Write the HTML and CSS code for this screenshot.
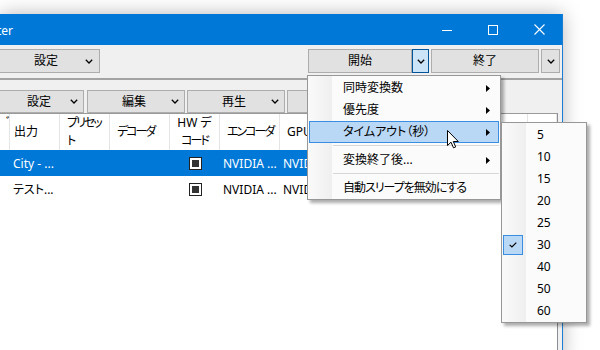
FILE: index.html
```html
<!DOCTYPE html>
<html lang="ja">
<head>
<meta charset="utf-8">
<link rel="stylesheet" href="styles.css">
</head>
<body>
<div class="desk">
  <div class="win">
    <div class="titlebar">
      <span class="title">ter</span>
      <div class="caps">
        <span class="cap"><svg width="10" height="10" viewBox="0 0 10 10"><line x1="0" y1="5.5" x2="10" y2="5.5" stroke="#fff" stroke-width="1"/></svg></span>
        <span class="cap"><svg width="10" height="10" viewBox="0 0 10 10"><rect x="0.5" y="0.5" width="9" height="9" fill="none" stroke="#fff" stroke-width="1"/></svg></span>
        <span class="cap"><svg width="11" height="11" viewBox="0 0 11 11"><path d="M0.5 0.5 L10.5 10.5 M10.5 0.5 L0.5 10.5" stroke="#fff" stroke-width="1.1"/></svg></span>
      </div>
    </div>

    <div class="tb1">
      <div class="btn btn-dd b-set"><span></span><span class="lbl">設定</span><svg class="chev" width="8" height="5" viewBox="0 0 8 5"><polyline points="0.8,0.8 4,4 7.2,0.8" fill="none" stroke="#000" stroke-width="1.3"/></svg></div>
      <div class="spacer"></div>
      <div class="btn b-start"><span class="lbl">開始</span></div>
      <div class="btn b-dd pressed"><svg width="8" height="5" viewBox="0 0 8 5"><polyline points="0.8,0.8 4,4 7.2,0.8" fill="none" stroke="#000" stroke-width="1.3"/></svg></div>
      <div class="btn b-end"><span class="lbl">終了</span></div>
      <div class="btn b-dd2"><svg width="8" height="5" viewBox="0 0 8 5"><polyline points="0.8,0.8 4,4 7.2,0.8" fill="none" stroke="#000" stroke-width="1.3"/></svg></div>
    </div>

    <div class="tb2">
      <div class="btn btn-dd b2 b2-first"><span></span><span class="lbl">設定</span><svg class="chev" width="8" height="5" viewBox="0 0 8 5"><polyline points="0.8,0.8 4,4 7.2,0.8" fill="none" stroke="#000" stroke-width="1.3"/></svg></div>
      <div class="btn btn-dd b2"><span></span><span class="lbl">編集</span><svg class="chev" width="8" height="5" viewBox="0 0 8 5"><polyline points="0.8,0.8 4,4 7.2,0.8" fill="none" stroke="#000" stroke-width="1.3"/></svg></div>
      <div class="btn btn-dd b2"><span></span><span class="lbl">再生</span><svg class="chev" width="8" height="5" viewBox="0 0 8 5"><polyline points="0.8,0.8 4,4 7.2,0.8" fill="none" stroke="#000" stroke-width="1.3"/></svg></div>
      <div class="btn btn-dd b2"><span></span><span class="lbl">表示</span><svg class="chev" width="8" height="5" viewBox="0 0 8 5"><polyline points="0.8,0.8 4,4 7.2,0.8" fill="none" stroke="#000" stroke-width="1.3"/></svg></div>
    </div>

    <div class="list">
      <div class="cols hdr">
        <div class="hc hc0">ﾞ</div>
        <div class="hc hc-out">出力</div>
        <div class="hc kn">プリセッ<br>ト</div>
        <div class="hc kn">デコーダ</div>
        <div class="hc hc-center"><span>HW デ<br><span class="kn">コード</span></span></div>
        <div class="hc kn">エンコーダ</div>
        <div class="hc">GPU</div>
        <div class="hc"></div>
        <div class="hc"></div>
        <div class="hc"></div>
        <div class="hc"></div>
      </div>
      <div class="cols row sel">
        <div class="c"></div>
        <div class="c">City - ...</div>
        <div class="c"></div>
        <div class="c"></div>
        <div class="c c-center"><span class="chk"></span></div>
        <div class="c">NVIDIA ...</div>
        <div class="c">NVIDIA ...</div>
        <div class="c"></div>
        <div class="c"></div>
        <div class="c"></div>
        <div class="c"></div>
      </div>
      <div class="cols row">
        <div class="c"></div>
        <div class="c">テスト...</div>
        <div class="c"></div>
        <div class="c"></div>
        <div class="c c-center"><span class="chk"></span></div>
        <div class="c">NVIDIA ...</div>
        <div class="c">NVIDIA ...</div>
        <div class="c"></div>
        <div class="c"></div>
        <div class="c"></div>
        <div class="c"></div>
      </div>
    </div>
  </div>

  <div class="menu">
    <div class="mi"><span class="ico"></span><span class="mt">同時変換数</span><svg class="arr" width="4" height="7" viewBox="0 0 4 7"><polygon points="0,0 4,3.5 0,7" fill="#000"/></svg></div>
    <div class="mi"><span class="ico"></span><span class="mt">優先度</span><svg class="arr" width="4" height="7" viewBox="0 0 4 7"><polygon points="0,0 4,3.5 0,7" fill="#000"/></svg></div>
    <div class="mi hot"><span class="ico"></span><span class="mt">タイムアウト（秒）</span><svg class="arr" width="4" height="7" viewBox="0 0 4 7"><polygon points="0,0 4,3.5 0,7" fill="#000"/></svg></div>
    <div class="sep"></div>
    <div class="mi"><span class="ico"></span><span class="mt">変換終了後...</span><svg class="arr" width="4" height="7" viewBox="0 0 4 7"><polygon points="0,0 4,3.5 0,7" fill="#000"/></svg></div>
    <div class="sep"></div>
    <div class="mi"><span class="ico"></span><span class="mt mt-tight">自動スリープを無効にする</span></div>
  </div>

  <div class="menu sub">
    <div class="mi"><span class="ico"></span><span class="mt">5</span></div>
    <div class="mi"><span class="ico"></span><span class="mt">10</span></div>
    <div class="mi"><span class="ico"></span><span class="mt">15</span></div>
    <div class="mi"><span class="ico"></span><span class="mt">20</span></div>
    <div class="mi"><span class="ico"></span><span class="mt">25</span></div>
    <div class="mi"><span class="ico checked"><svg width="8" height="6" viewBox="0 0 8 6"><polyline points="0.7,2.8 2.9,5 7.3,0.6" fill="none" stroke="#000" stroke-width="1.2"/></svg></span><span class="mt">30</span></div>
    <div class="mi"><span class="ico"></span><span class="mt">40</span></div>
    <div class="mi"><span class="ico"></span><span class="mt">50</span></div>
    <div class="mi"><span class="ico"></span><span class="mt">60</span></div>
  </div>

  <svg class="cursor" width="13" height="19" viewBox="0 0 13 19"><path d="M0.5 0.5 L0.5 15.5 L4 12.2 L6.5 17.8 L8.7 16.9 L6.3 11.5 L11.3 11.5 Z" fill="#fff" stroke="#000" stroke-width="1" stroke-linejoin="miter"/></svg>
</div>
</body>
</html>
```

FILE: styles.css
```css
* { box-sizing: border-box; }

body {
  margin: 0;
  width: 600px;
  height: 350px;
  overflow: hidden;
  background: #fff;
  font-family: "Noto Sans", "Noto Sans CJK JP", sans-serif;
  font-size: 12px;
  font-feature-settings: "palt" 1;
  color: #000;
}

.desk {
  position: relative;
  width: 600px;
  height: 350px;
  overflow: hidden;
}

.win {
  position: absolute;
  left: 0;
  top: 14px;
  width: 563px;
  height: 350px;
  background: #f0f0f0;
  border-right: 1px solid #1a7fd4;
  box-shadow: 0 0 18px rgba(0, 0, 0, 0.28);
  display: flex;
  flex-direction: column;
}

.titlebar {
  flex: none;
  height: 31px;
  background: #0078d7;
  color: #fff;
  display: flex;
  align-items: center;
}

.title {
  flex: 1;
  margin-left: -3px;
  padding-top: 1px;
  font-size: 12px;
}

.caps {
  display: flex;
  height: 100%;
}

.cap {
  width: 46px;
  display: flex;
  align-items: center;
  justify-content: center;
}

.tb1 {
  flex: none;
  height: 35px;
  padding: 4px 2px 5px 0;
  border-bottom: 2px solid #a3a3a3;
  display: flex;
}

.btn {
  height: 24px;
  background: #e1e1e1;
  border: 1px solid #adadad;
  display: flex;
  align-items: center;
  justify-content: center;
  line-height: 1;
}

.btn-dd {
  display: grid;
  grid-template-columns: 1fr auto 1fr;
  align-items: center;
}

.btn-dd .chev { justify-self: end; }

.b-set {
  width: 102px;
  margin-left: -2px;
  padding: 0 6px 0 0;
}

.spacer { flex: 1; }

.b-start { width: 104px; }

.b-dd { width: 17px; }

.pressed {
  background: #cce4f7;
  border-color: #005499;
}

.b-end {
  width: 108px;
  margin-left: 2px;
}

.b-dd2 {
  width: 19px;
  margin-left: 2px;
}

.tb2 {
  flex: none;
  height: 33px;
  padding-top: 10px;
  display: flex;
  gap: 2px;
}

.b2 {
  height: 23px;
  width: 98px;
  padding: 0 5px 0 1px;
}

.b2-first {
  width: 86px;
  margin-left: -2px;
  margin-right: 1px;
}

.list {
  flex: 1;
  margin-right: 4px;
  background: #fff;
  border-top: 1px solid #9a9a9a;
  border-right: 1px solid #8a8f96;
}

.cols {
  display: grid;
  grid-template-columns: 10px 50px 50px 60px 50px 60px 60px 60px 60px 68px 29px;
}

.hc {
  height: 36px;
  border-right: 1px solid #e5e5e5;
  padding-left: 7px;
  display: flex;
  align-items: center;
  line-height: 18px;
  white-space: nowrap;
  overflow: hidden;
}

.kn { letter-spacing: -2px; }

.hc0 {
  padding-left: 6px;
  align-items: flex-start;
}

.hc-out { padding-left: 4px; }

.hc-center {
  padding-left: 0;
  justify-content: center;
  text-align: center;
}

.row { height: 26px; }

.sel {
  background: #0078d7;
  color: #fff;
}

.c {
  padding-left: 3px;
  display: flex;
  align-items: center;
  white-space: nowrap;
  overflow: hidden;
}

.c-center {
  padding-left: 0;
  justify-content: center;
}

.chk {
  width: 13px;
  height: 13px;
  border: 1px solid #222;
  background: #fff;
  display: flex;
  align-items: center;
  justify-content: center;
}

.chk::after {
  content: "";
  width: 7px;
  height: 7px;
  background: #333;
}

.menu {
  position: absolute;
  left: 307px;
  top: 75px;
  width: 194px;
  height: 125px;
  padding: 1px 1px 0 1px;
  border: 1px solid #979797;
  background: linear-gradient(to right, #fafafa 0, #efefef 24px, #fbfbfb 24px);
  box-shadow: 3px 3px 3px rgba(0, 0, 0, 0.32);
}

.sub {
  left: 501px;
  top: 122px;
  width: 86px;
  height: 201px;
}

.mi {
  height: 22px;
  display: flex;
  align-items: center;
  border: 1px solid transparent;
  line-height: 1;
}

.mi.hot {
  background: #b9d8f5;
  border-color: #3a8ee2;
}

.ico {
  flex: none;
  width: 20px;
  height: 20px;
  margin-left: -1px;
  margin-right: 14px;
  display: flex;
  align-items: center;
  justify-content: center;
}

.ico.checked {
  background: #b9d8f5;
  border: 1px solid #3a8ee2;
}

.mt { flex: 1; white-space: nowrap; }

.mt-tight { letter-spacing: -1px; }

.arr {
  flex: none;
  margin-right: 8px;
}

.sep {
  height: 6px;
  margin-left: 24px;
  padding-top: 2px;
}

.sep::after {
  content: "";
  display: block;
  height: 1px;
  background: #d7d7d7;
}

.cursor {
  position: absolute;
  left: 447px;
  top: 130px;
}
```
